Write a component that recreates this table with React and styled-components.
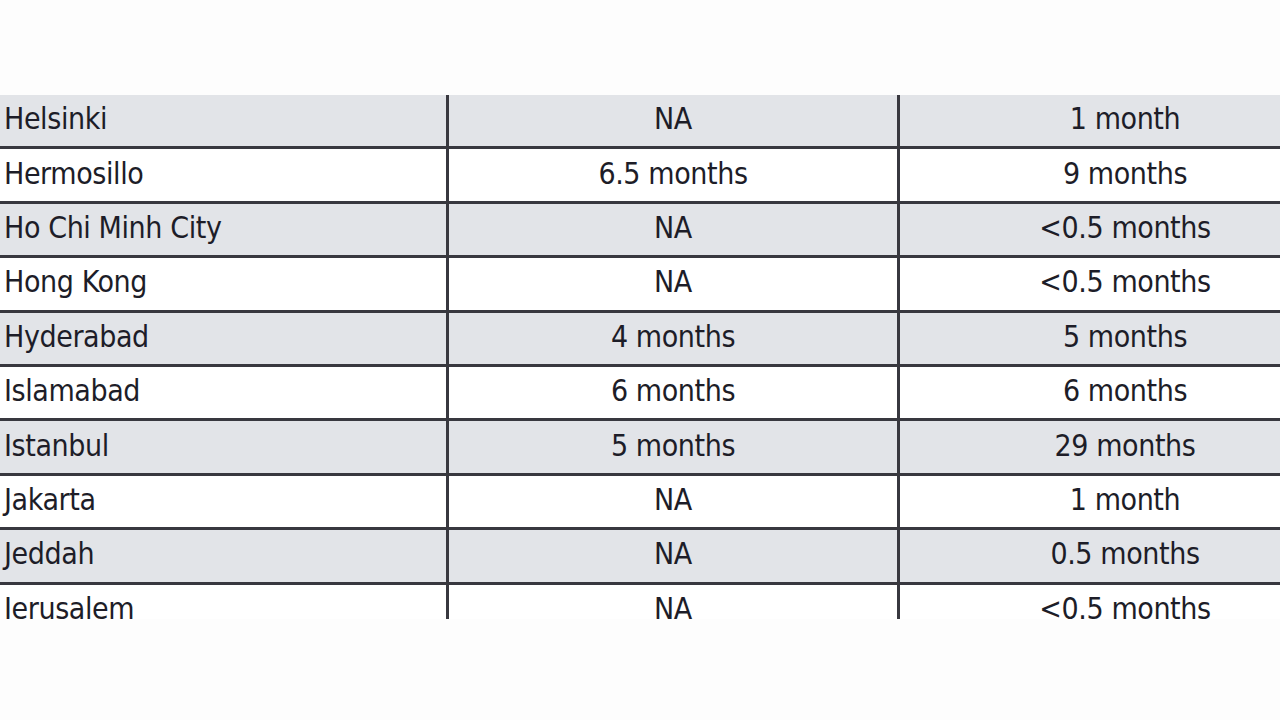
import styled, { createGlobalStyle } from "styled-components";

const rows = [
  ["Helsinki", "NA", "1 month"],
  ["Hermosillo", "6.5 months", "9 months"],
  ["Ho Chi Minh City", "NA", "<0.5 months"],
  ["Hong Kong", "NA", "<0.5 months"],
  ["Hyderabad", "4 months", "5 months"],
  ["Islamabad", "6 months", "6 months"],
  ["Istanbul", "5 months", "29 months"],
  ["Jakarta", "NA", "1 month"],
  ["Jeddah", "NA", "0.5 months"],
  ["Jerusalem", "NA", "<0.5 months"],
];

const GlobalStyle = createGlobalStyle`
  html, body {
    margin: 0;
    padding: 0;
    background: #fdfdfd;
  }
`;

const Page = styled.div`
  width: 1280px;
  height: 720px;
  overflow: hidden;
  padding-top: 95px;
  box-sizing: border-box;
  background: #fdfdfd;
`;

const TableClip = styled.div`
  width: 1280px;
  height: 524px;
  overflow: hidden;
`;

const Table = styled.div`
  width: 1350px;
  display: flex;
  flex-direction: column;
`;

const Row = styled.div`
  display: grid;
  grid-template-columns: 446px 451px 453px;
  height: 51.4px;
  background: ${(p) => (p.$shaded ? "#e2e4e8" : "#ffffff")};
  border-top: ${(p) => (p.$first ? "none" : "3px solid #38383f")};
`;

const Cell = styled.div`
  display: flex;
  align-items: center;
  justify-content: ${(p) => (p.$center ? "center" : "flex-start")};
  padding-left: ${(p) => (p.$center ? "0" : "4px")};
  padding-bottom: 4px;
  border-left: ${(p) => (p.$center ? "3px solid #38383f" : "none")};
  font-family: "DejaVu Sans Condensed", "DejaVu Sans", sans-serif;
  font-stretch: condensed;
  font-size: 30px;
  letter-spacing: -0.4px;
  color: #1d1d28;
  white-space: nowrap;
`;

export default function App() {
  return (
    <>
      <GlobalStyle />
      <Page>
        <TableClip>
          <Table>
            {rows.map((r, i) => (
              <Row key={r[0]} $shaded={i % 2 === 0} $first={i === 0}>
                <Cell>{r[0]}</Cell>
                <Cell $center>{r[1]}</Cell>
                <Cell $center>{r[2]}</Cell>
              </Row>
            ))}
          </Table>
        </TableClip>
      </Page>
    </>
  );
}
